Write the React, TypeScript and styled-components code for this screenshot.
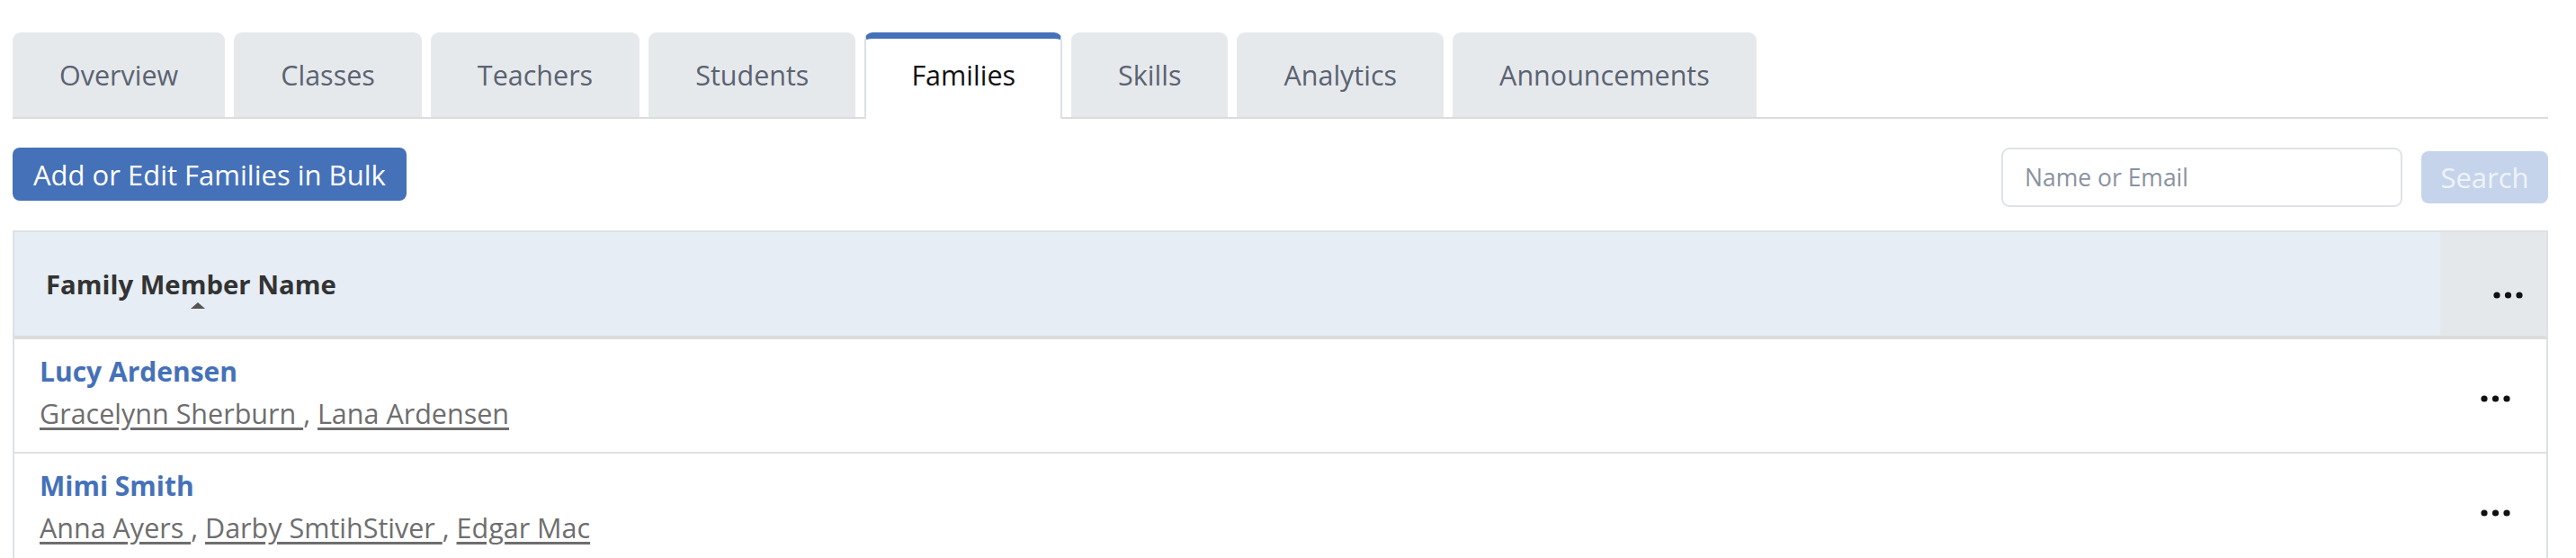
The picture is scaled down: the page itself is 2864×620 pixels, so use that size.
import React from "react";
import styled, { createGlobalStyle } from "styled-components";

const GlobalStyle = createGlobalStyle`
  html, body { margin: 0; padding: 0; background: #ffffff; }
  body { font-family: "Open Sans", "Noto Sans", Arial, sans-serif; }
  * { box-sizing: border-box; }
`;

const Page = styled.div`
  padding: 36px 31px 0 14px;
`;

const TabBar = styled.div`
  display: flex;
  align-items: flex-end;
  gap: 10px;
  border-bottom: 2px solid #dcdcdc;
`;

const Tab = styled.div<{ $active?: boolean }>`
  display: flex;
  align-items: center;
  font-size: 30.5px;
  border-radius: 9px 9px 0 0;
  white-space: nowrap;
  ${(p) =>
    p.$active
      ? `
    height: 96px;
    margin-bottom: -2px;
    padding: 0 50px 9px;
    background: #ffffff;
    color: #111111;
    border: 2px solid #dde1e6;
    border-top: 7px solid #4571b9;
    border-bottom: none;
  `
      : `
    height: 94px;
    padding: 0 52px;
    background: #e6e9ec;
    color: #5b6372;
  `}
`;

const Toolbar = styled.div`
  display: flex;
  justify-content: space-between;
  align-items: flex-start;
  margin-top: 32px;
`;

const BulkButton = styled.button`
  height: 59px;
  padding: 0 23px;
  border: none;
  border-radius: 8px;
  background: #4571b9;
  color: #ffffff;
  font-family: inherit;
  font-size: 31px;
`;

const SearchGroup = styled.div`
  display: flex;
  align-items: center;
  gap: 21px;
`;

const SearchInput = styled.input`
  width: 446px;
  height: 66px;
  padding: 0 24px;
  border: 2px solid #dfe3e8;
  border-radius: 9px;
  font-family: inherit;
  font-size: 26.5px;
  color: #333;
  outline: none;
  &::placeholder { color: #8a92a0; }
`;

const SearchButton = styled.button`
  width: 141px;
  height: 58px;
  border: none;
  border-radius: 8px;
  background: #c6d4eb;
  color: #eef3fa;
  font-family: inherit;
  font-size: 31px;
`;

const Table = styled.div`
  margin-top: 26px;
  border: 2px solid #dde1e6;
  border-bottom: none;
`;

const HeaderRow = styled.div`
  display: grid;
  grid-template-columns: 1fr 118px;
  height: 119px;
  border-bottom: 4px solid #dcdcdc;
`;

const HeaderCell = styled.div`
  display: flex;
  align-items: center;
  padding-left: 35px;
  background: #e6edf5;
`;

const HeaderLabel = styled.span`
  position: relative;
  font-size: 29.3px;
  font-weight: 700;
  color: #333333;
`;

const SortArrow = styled.span`
  position: absolute;
  left: calc(50% + 8px);
  top: 100%;
  transform: translateX(-50%);
  width: 0;
  height: 0;
  border-left: 8px solid transparent;
  border-right: 8px solid transparent;
  border-bottom: 7px solid #555555;
`;

const ActionHeader = styled.div`
  display: flex;
  align-items: center;
  padding: 24px 0 0 59px;
  background: #e5e8eb;
`;

const Row = styled.div`
  display: grid;
  grid-template-columns: 1fr 118px;
  height: 127px;
  border-bottom: 2px solid #dde1e6;
`;

const NameCell = styled.div`
  padding: 13px 0 0 28px;
  line-height: 46px;
`;

const FamilyName = styled.a`
  display: block;
  font-size: 30px;
  font-weight: 700;
  color: #4571b9;
  text-decoration: none;
`;

const Members = styled.div`
  font-size: 30.5px;
  color: #6e6e6e;
  white-space: nowrap;
`;

const MemberLink = styled.a`
  color: #6e6e6e;
  text-decoration: underline;
  text-underline-offset: 4px;
`;

const ActionCell = styled.div`
  display: flex;
  align-items: center;
  padding: 6px 0 0 45px;
`;

const Dots = () => (
  <svg width="33" height="8" viewBox="0 0 33 8">
    <circle cx="4" cy="4" r="3.6" fill="#111" />
    <circle cx="16.5" cy="4" r="3.6" fill="#111" />
    <circle cx="29" cy="4" r="3.6" fill="#111" />
  </svg>
);

const tabs = ["Overview", "Classes", "Teachers", "Students", "Families", "Skills", "Analytics", "Announcements"];

const families = [
  { name: "Lucy Ardensen", members: ["Gracelynn Sherburn", "Lana Ardensen"] },
  { name: "Mimi Smith", members: ["Anna Ayers", "Darby SmtihStiver", "Edgar Mac"] },
];

export default function App() {
  return (
    <Page>
      <GlobalStyle />
      <TabBar>
        {tabs.map((t) => (
          <Tab key={t} $active={t === "Families"}>
            {t}
          </Tab>
        ))}
      </TabBar>
      <Toolbar>
        <BulkButton>Add or Edit Families in Bulk</BulkButton>
        <SearchGroup>
          <SearchInput placeholder="Name or Email" />
          <SearchButton disabled>Search</SearchButton>
        </SearchGroup>
      </Toolbar>
      <Table>
        <HeaderRow>
          <HeaderCell>
            <HeaderLabel>
              Family Member Name
              <SortArrow />
            </HeaderLabel>
          </HeaderCell>
          <ActionHeader>
            <Dots />
          </ActionHeader>
        </HeaderRow>
        {families.map((f) => (
          <Row key={f.name}>
            <NameCell>
              <FamilyName href="#">{f.name}</FamilyName>
              <Members>
                {f.members.map((m, i) => (
                  <React.Fragment key={m}>
                    <MemberLink href="#">{i < f.members.length - 1 ? m + " " : m}</MemberLink>
                    {i < f.members.length - 1 ? ", " : ""}
                  </React.Fragment>
                ))}
              </Members>
            </NameCell>
            <ActionCell>
              <Dots />
            </ActionCell>
          </Row>
        ))}
      </Table>
    </Page>
  );
}
